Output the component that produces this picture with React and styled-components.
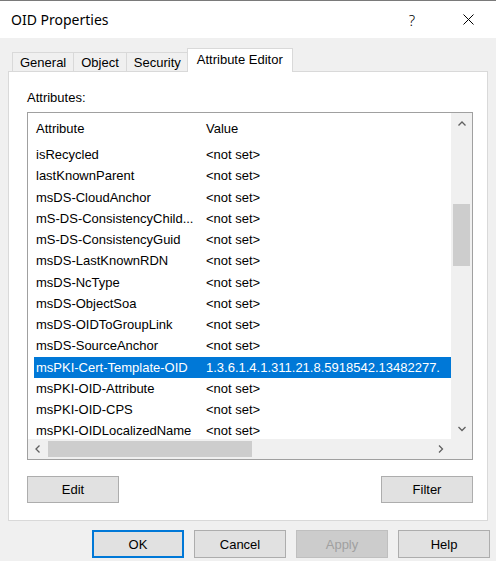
import React from 'react'
import styled, { createGlobalStyle } from 'styled-components'

const GlobalStyle = createGlobalStyle`
  html, body { margin: 0; padding: 0; background: #f0f0f0; }
  body {
    font-family: "Liberation Sans", Arial, sans-serif;
    font-size: 13px;
    color: #000;
  }
  * { box-sizing: border-box; }
`

const Window = styled.div`
  width: 496px;
  height: 561px;
  border-top: 1px solid #7a7a7a;
  background: #f0f0f0;
  display: flex;
  flex-direction: column;
  overflow: hidden;
`

const TitleBar = styled.div`
  height: 37px;
  flex: none;
  background: #fff;
  display: flex;
  align-items: center;
  padding: 0 5px 0 11px;
`

const Title = styled.div`
  flex: 1;
  font-family: "Noto Sans", sans-serif;
  font-size: 14px;
`

const Caption = styled.div`
  width: 46px;
  height: 100%;
  margin-left: 10px;
  display: flex;
  align-items: center;
  justify-content: center;
  font-family: "Noto Sans", sans-serif;
  font-size: 15px;
  font-weight: 300;
`

const Body = styled.div`
  padding: 10px 8px 0;
`

const TabStrip = styled.div`
  display: flex;
  align-items: flex-end;
  height: 23px;
  padding-left: 5px;
`

const Tab = styled.div`
  position: relative;
  display: flex;
  align-items: center;
  padding: 0 7px;
  border: 1px solid #d9d9d9;
  border-bottom: none;
  margin-left: -1px;
  white-space: nowrap;
  ${p => p.$active ? `
    height: 24px;
    margin: 0 -2px -1px -2px;
    padding: 0 9px 2px;
    background: #fff;
    z-index: 1;
  ` : `
    height: 19px;
    background: #f0f0f0;
  `}
`

const Panel = styled.div`
  height: 450px;
  background: #fff;
  border: 1px solid #d9d9d9;
  padding: 18px 14px 17px 18px;
  display: flex;
  flex-direction: column;
`

const Label = styled.div`
  line-height: 15px;
  margin-bottom: 7px;
`

const ListBox = styled.div`
  height: 348px;
  border: 1px solid #a0a0a0;
  background: #fff;
  display: grid;
  grid-template-columns: 1fr 21px;
  grid-template-rows: 1fr 20px;
  overflow: hidden;
`

const Rows = styled.div`
  overflow: hidden;
  min-width: 0;
`

const Row = styled.div`
  display: flex;
  align-items: center;
  height: ${p => p.$header ? '31px' : '21.25px'};
  margin-left: 6px;
  white-space: nowrap;
  ${p => p.$selected && `
    background: #0078d7;
    color: #fff;
  `}
`

const Cell = styled.div`
  overflow: hidden;
  flex: none;
  ${p => p.$first ? `
    width: 164px;
    padding-left: 2px;
  ` : `
    padding-left: 8px;
    width: 250px;
  `}
`

const VScroll = styled.div`
  background: #f0f0f0;
  display: flex;
  flex-direction: column;
`

const HScroll = styled.div`
  background: #f0f0f0;
  display: flex;
  align-items: center;
`

const Corner = styled.div`
  background: #f0f0f0;
`

const Arrow = styled.div`
  flex: none;
  width: ${p => p.$horizontal ? '20px' : '21px'};
  height: ${p => p.$horizontal ? '20px' : '21px'};
  display: flex;
  align-items: center;
  justify-content: center;
`

const VThumb = styled.div`
  margin: ${p => p.$offset}px 2px 0;
  height: ${p => p.$size}px;
  background: #cdcdcd;
`

const HThumb = styled.div`
  margin-left: ${p => p.$offset}px;
  width: ${p => p.$size}px;
  height: 16px;
  background: #cdcdcd;
`

const Spacer = styled.div`
  flex: 1;
`

const ActionRow = styled.div`
  margin-top: 16px;
  display: flex;
  justify-content: space-between;
`

const Button = styled.button`
  width: 92px;
  height: ${p => p.$tall ? '28px' : '27px'};
  font-family: "Liberation Sans", Arial, sans-serif;
  font-size: 13px;
  color: #000;
  background: #e1e1e1;
  border: 1px solid #adadad;
  padding: 0;
  ${p => p.$default && `
    border: 2px solid #0078d7;
  `}
  ${p => p.disabled && `
    background: #cccccc;
    border-color: #bfbfbf;
    color: #a0a0a0;
  `}
`

const Footer = styled.div`
  display: flex;
  justify-content: flex-end;
  gap: 10px;
  padding: 9px 6px 0;
`

const Chevron = ({ dir }) => {
  const pts = {
    up: '0.5,4.5 4,1 7.5,4.5',
    down: '0.5,1 4,4.5 7.5,1',
    left: '4.5,0.5 1,4 4.5,7.5',
    right: '1,0.5 4.5,4 1,7.5',
  }[dir]
  const vertical = dir === 'up' || dir === 'down'
  return (
    <svg width={vertical ? 8 : 6} height={vertical ? 6 : 8} viewBox={vertical ? '0 0 8 6' : '0 0 6 8'}>
      <polyline points={pts} fill="none" stroke="#606060" strokeWidth="1.3" />
    </svg>
  )
}

const CloseIcon = () => (
  <svg width="11" height="11" viewBox="0 0 11 11">
    <path d="M0.5 0.5 L10.5 10.5 M10.5 0.5 L0.5 10.5" stroke="#000" strokeWidth="1" />
  </svg>
)

const attributes = [
  ['isRecycled', '<not set>'],
  ['lastKnownParent', '<not set>'],
  ['msDS-CloudAnchor', '<not set>'],
  ['mS-DS-ConsistencyChild...', '<not set>'],
  ['mS-DS-ConsistencyGuid', '<not set>'],
  ['msDS-LastKnownRDN', '<not set>'],
  ['msDS-NcType', '<not set>'],
  ['msDS-ObjectSoa', '<not set>'],
  ['msDS-OIDToGroupLink', '<not set>'],
  ['msDS-SourceAnchor', '<not set>'],
  ['msPKI-Cert-Template-OID', '1.3.6.1.4.1.311.21.8.5918542.13482277.'],
  ['msPKI-OID-Attribute', '<not set>'],
  ['msPKI-OID-CPS', '<not set>'],
  ['msPKI-OIDLocalizedName', '<not set>'],
]

const tabs = ['General', 'Object', 'Security', 'Attribute Editor']

const App = () => {
  return (
    <Window>
      <GlobalStyle />
      <TitleBar>
        <Title>OID Properties</Title>
        <Caption>?</Caption>
        <Caption><CloseIcon /></Caption>
      </TitleBar>
      <Body>
        <TabStrip>
          {tabs.map(t => (
            <Tab key={t} $active={t === 'Attribute Editor'}>{t}</Tab>
          ))}
        </TabStrip>
        <Panel>
          <Label>Attributes:</Label>
          <ListBox>
            <Rows>
              <Row $header>
                <Cell $first>Attribute</Cell>
                <Cell>Value</Cell>
              </Row>
              {attributes.map(([name, value]) => (
                <Row key={name} $selected={name === 'msPKI-Cert-Template-OID'}>
                  <Cell $first>{name}</Cell>
                  <Cell>{value}</Cell>
                </Row>
              ))}
            </Rows>
            <VScroll>
              <Arrow><Chevron dir="up" /></Arrow>
              <VThumb $offset={70} $size={62} />
              <Spacer />
              <Arrow><Chevron dir="down" /></Arrow>
            </VScroll>
            <HScroll>
              <Arrow $horizontal><Chevron dir="left" /></Arrow>
              <HThumb $offset={0} $size={204} />
              <Spacer />
              <Arrow $horizontal><Chevron dir="right" /></Arrow>
            </HScroll>
            <Corner />
          </ListBox>
          <ActionRow>
            <Button>Edit</Button>
            <Button>Filter</Button>
          </ActionRow>
        </Panel>
      </Body>
      <Footer>
        <Button $tall $default>OK</Button>
        <Button $tall>Cancel</Button>
        <Button $tall disabled>Apply</Button>
        <Button $tall>Help</Button>
      </Footer>
    </Window>
  )
}

export default App
